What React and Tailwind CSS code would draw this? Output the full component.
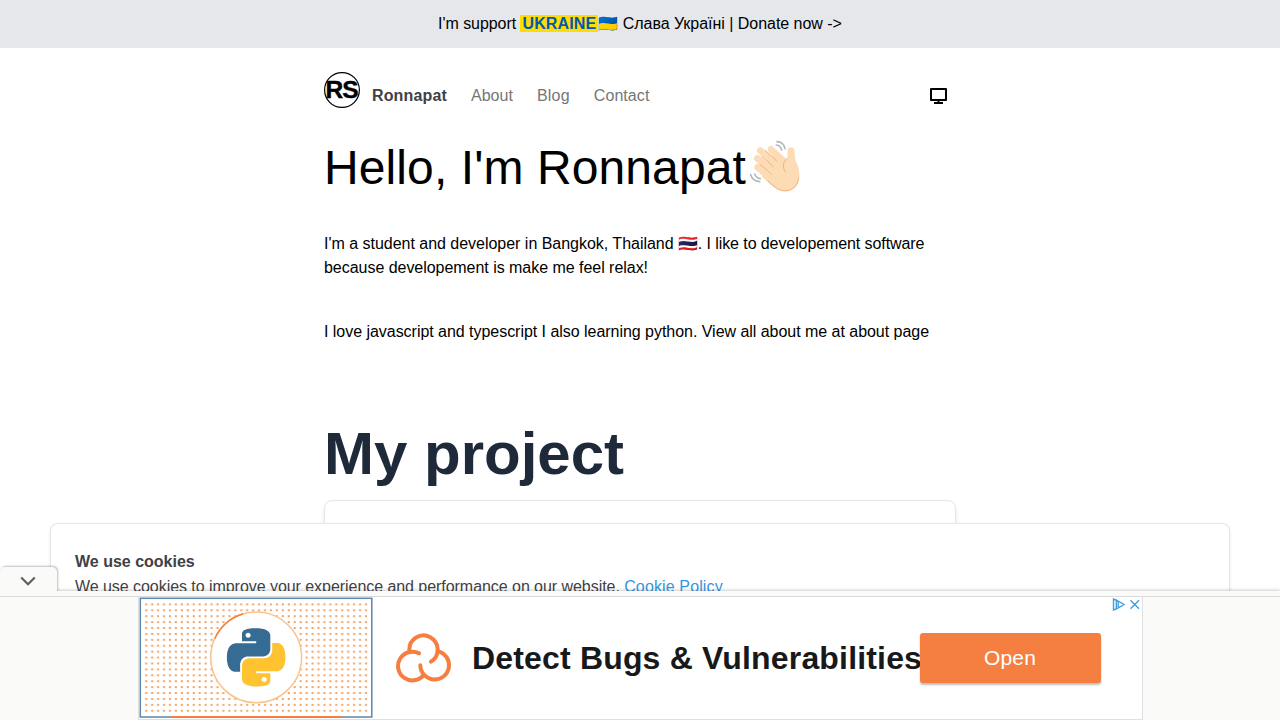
import React from "react";

const PYTHON_HALF =
  "M14.25.18l.9.2.73.26.59.3.45.32.34.34.25.34.16.33.1.3.04.26.02.2-.01.13V8.5l-.05.63-.13.55-.21.46-.26.38-.3.31-.33.25-.35.19-.35.14-.33.1-.3.07-.26.04-.21.02H8.77l-.69.05-.59.14-.5.22-.41.27-.33.32-.27.35-.2.36-.15.37-.1.35-.07.32-.04.27-.02.21v3.06H3.17l-.21-.03-.28-.07-.32-.12-.35-.18-.36-.26-.36-.36-.35-.46-.32-.59-.28-.73-.21-.88-.14-1.05-.05-1.23.06-1.22.16-1.04.24-.87.32-.71.36-.57.4-.44.42-.33.42-.24.4-.16.36-.1.32-.05.24-.01h.16l.06.01h8.16v-.83H6.18l-.01-2.75-.02-.37.05-.34.11-.31.17-.28.25-.26.31-.23.38-.2.44-.18.51-.15.58-.12.64-.1.71-.06.77-.04.84-.02 1.27.05zm-6.3 1.98l-.23.33-.08.41.08.41.23.34.33.22.41.09.41-.09.33-.22.23-.34.08-.41-.08-.41-.23-.33-.33-.22-.41-.09-.41.09z";

function SupportBanner() {
  return (
    <div className="flex h-12 items-center justify-center bg-gray-200 text-base">
      <p className="whitespace-pre">
        <span className="tracking-[-0.06px]">I'm support </span>
        <span className="bg-[#ffdd00] px-0.5 font-bold leading-none tracking-[0.14px] text-[#0057b7]">UKRAINE</span>
        🇺🇦<span className="tracking-[-0.03px]"> Слава Україні | Donate now -&gt;</span>
      </p>
    </div>
  );
}

function Logo() {
  return (
    <svg className="size-9" viewBox="0 0 36 36">
      <circle cx="18" cy="18" r="17.4" fill="none" stroke="#000" strokeWidth="1.2" />
      <text x="18" y="25.8" textAnchor="middle" fontSize="24.5" fontWeight="700" textLength="33" stroke="#000" strokeWidth="0.4" fontFamily="Liberation Sans, sans-serif">
        RS
      </text>
    </svg>
  );
}

function Nav() {
  return (
    <nav className="flex h-9 items-start">
      <Logo />
      <div className="ml-3 mt-3 flex gap-6 text-[#767676]">
        <a className="font-bold tracking-[0.14px] text-[#404145]">Ronnapat</a>
        <a className="tracking-[0.05px]">About</a>
        <a className="tracking-[0.2px]">Blog</a>
        <a className="tracking-[0.07px]">Contact</a>
      </div>
      <svg className="ml-auto mr-2 mt-3.5 h-5 w-[19px]" viewBox="0 0 19 20">
        <path d="M2 3h15v11H2z" fill="none" stroke="#000" strokeWidth="2" strokeLinejoin="round" />
        <path d="M8.5 14h2v3h-2zM5 16h9v2H5z" />
      </svg>
    </nav>
  );
}

function WavingHand() {
  return (
    <svg className="-mt-2 h-[60px] w-[58px] shrink-0" viewBox="0 0 174 180" fill="none" strokeLinecap="round" role="img" aria-label="waving hand">
      <path
        d="M74 60L108 62L121 71C128 62 123 50 125 40C129 31 142 32 145 41C147 52 146 64 149 75C156 88 162 104 160 124C157 148 145 163 123 166C103 168 88 157 74 146L48 122L58 80Z"
        fill="#fddbb4"
      />
      <g stroke="#fddbb4" strokeWidth="20">
        <path d="M75 40L112 74" />
        <path d="M43 44L95 86" />
        <path d="M34 67L85 110" />
        <path d="M35 94L82 134" />
      </g>
      <g stroke="#eeb585" strokeWidth="3">
        <path d="M58 44L80 62L92 76" />
        <path d="M47 62L72 82L81 93" />
        <path d="M42 86L64 103L76 115" />
        <path d="M123 68C110 78 109 95 118 108" />
        <path d="M66 135C92 161 108 168 128 163C145 159 156 145 158 125" />
      </g>
      <g stroke="#b0b9bf" strokeWidth="5">
        <path d="M93 17C104 17 114 25 117 38" />
        <path d="M91 27C99 28 105 34 107 42" />
        <path d="M14 116C17 128 28 136 41 137" />
        <path d="M26 114C29 122 35 127 43 128" />
      </g>
    </svg>
  );
}

function PythonArt() {
  return (
    <svg className="h-[121px] w-[234px] shrink-0" viewBox="139 597 234 121">
      <defs>
        <pattern id="dots" x="143.4" y="601.4" width="5.94" height="5.91" patternUnits="userSpaceOnUse">
          <rect x="1.8" y="2" width="2" height="2" fill="#f5a060" />
        </pattern>
      </defs>
      <rect x="143.4" y="601.4" width="225" height="112" fill="url(#dots)" />
      <rect x="140.3" y="598.3" width="231.5" height="118.7" fill="none" stroke="#5f86ad" strokeWidth="1.5" />
      <path d="M171 716.8H342" stroke="#f57f40" strokeWidth="1.8" />
      <circle cx="256.2" cy="657.3" r="45.4" fill="#fff" stroke="#f8c48f" strokeWidth="1.5" />
      <path d="M214.8 638.7A45.4 45.4 0 0 1 243.2 613.8" fill="none" stroke="#f57f40" strokeWidth="1.5" />
      <g transform="translate(227 628.2) scale(2.43)">
        <path d={PYTHON_HALF} fill="#366b93" />
        <path d={PYTHON_HALF} fill="#ffc331" transform="rotate(180 12 12)" />
      </g>
    </svg>
  );
}

function CloudKnot() {
  return (
    <svg className="h-[50px] w-[57px] shrink-0" viewBox="46 129 171 150" fill="none" stroke="#f57f40" strokeWidth="12" strokeLinecap="round">
      <path d="M89 180A42.5 42.5 0 1 1 154 215" />
      <path d="M118 190A43 43 0 1 0 131 256" />
      <path d="M122 226A43 43 0 1 0 176 184" />
    </svg>
  );
}

function AdBanner() {
  return (
    <div className="absolute inset-x-0 bottom-0 flex h-[129px] flex-col bg-[#fafaf8] pt-[5px] shadow-[0_-1px_3px_rgba(0,0,0,0.2)]">
      <div className="absolute -top-6 left-0 flex h-[25px] w-[57px] items-center justify-center rounded-t-[5px] bg-[#fafaf8] shadow-[1px_-1px_2px_rgba(0,0,0,0.25)]">
        <svg className="mr-0.5 mt-0.5 h-2.5 w-4" viewBox="0 0 16 10">
          <path d="M1.2 1.5L8 8.3L14.8 1.5" fill="none" stroke="#616161" strokeWidth="2.2" />
        </svg>
      </div>
      <div className="absolute inset-x-0 top-0 h-3 bg-[#fafaf8]" />
      <div className="relative flex grow border-t border-[#dadada]">
        <div className="relative ml-[138px] flex w-[1005px] items-start border border-t-0 border-[#e0e0e0] bg-white">
          <PythonArt />
          <div className="ml-[22px] mt-9">
            <CloudKnot />
          </div>
          <div className="ml-5 mt-10 w-[448px] whitespace-nowrap text-[32px] font-bold leading-[42px] tracking-[0.17px] text-[#17191b]">
            Detect Bugs &amp; Vulnerabilities
          </div>
          <div className="relative mt-9 flex h-[50px] w-[181px] items-center justify-center rounded-[3px] bg-[#f57f41] pr-px text-[21px] tracking-[0.2px] text-white shadow-[0_2px_2px_rgba(0,0,0,0.25)]">
            Open
          </div>
          <svg className="absolute right-0 top-0 h-[15px] w-[30px]" viewBox="0 0 30 15" fill="none" stroke="#3f9fe0" strokeWidth="1.4">
            <path d="M1.5 2V13L4 12L12 7.5L4 3ZM4.3 3.5V12M6.2 5.2V10" />
            <path d="M18.5 3.3L27 11.8M27 3.3L18.5 11.8" />
          </svg>
        </div>
      </div>
    </div>
  );
}

export default function App() {
  return (
    <div className="relative h-[720px] w-full overflow-hidden bg-white font-['Liberation_Sans','Noto_Color_Emoji',sans-serif] text-base text-black">
      <SupportBanner />
      <main className="mx-auto w-[632px] pt-6">
        <Nav />
        <h1 className="mt-9 flex h-12 items-start whitespace-nowrap text-5xl leading-[48px] tracking-[0.1px]">
          Hello, I'm Ronnapat
          <WavingHand />
        </h1>
        <p className="mt-10 tracking-[-0.09px]">
          <span className="tracking-[-0.02px]">I'm a student and developer in Bangkok, Thailand </span>🇹🇭. I like to developement software{" "}
          <span className="tracking-[-0.035px]">because developement is make me feel relax!</span>
        </p>
        <p className="mt-10 tracking-[-0.035px]">I love javascript and typescript I also learning python. View all about me at about page</p>
        <h2 className="mt-20 text-6xl font-bold leading-[60px] text-gray-800">My project</h2>
        <div className="mt-4 h-60 rounded-lg border border-gray-200 shadow-md" />
      </main>
      <section className="absolute left-[50px] top-[523px] h-40 w-[1180px] rounded-lg border border-gray-200 bg-white px-6 pt-[25px] leading-[25px] text-[#404145] shadow-sm">
        <h3 className="font-bold">We use cookies</h3>
        <p className="tracking-[-0.05px]">
          We use cookies to improve your experience and performance on our website. <a className="tracking-[0.13px] text-[#3396e0]">Cookie Policy</a>
        </p>
      </section>
      <AdBanner />
    </div>
  );
}
